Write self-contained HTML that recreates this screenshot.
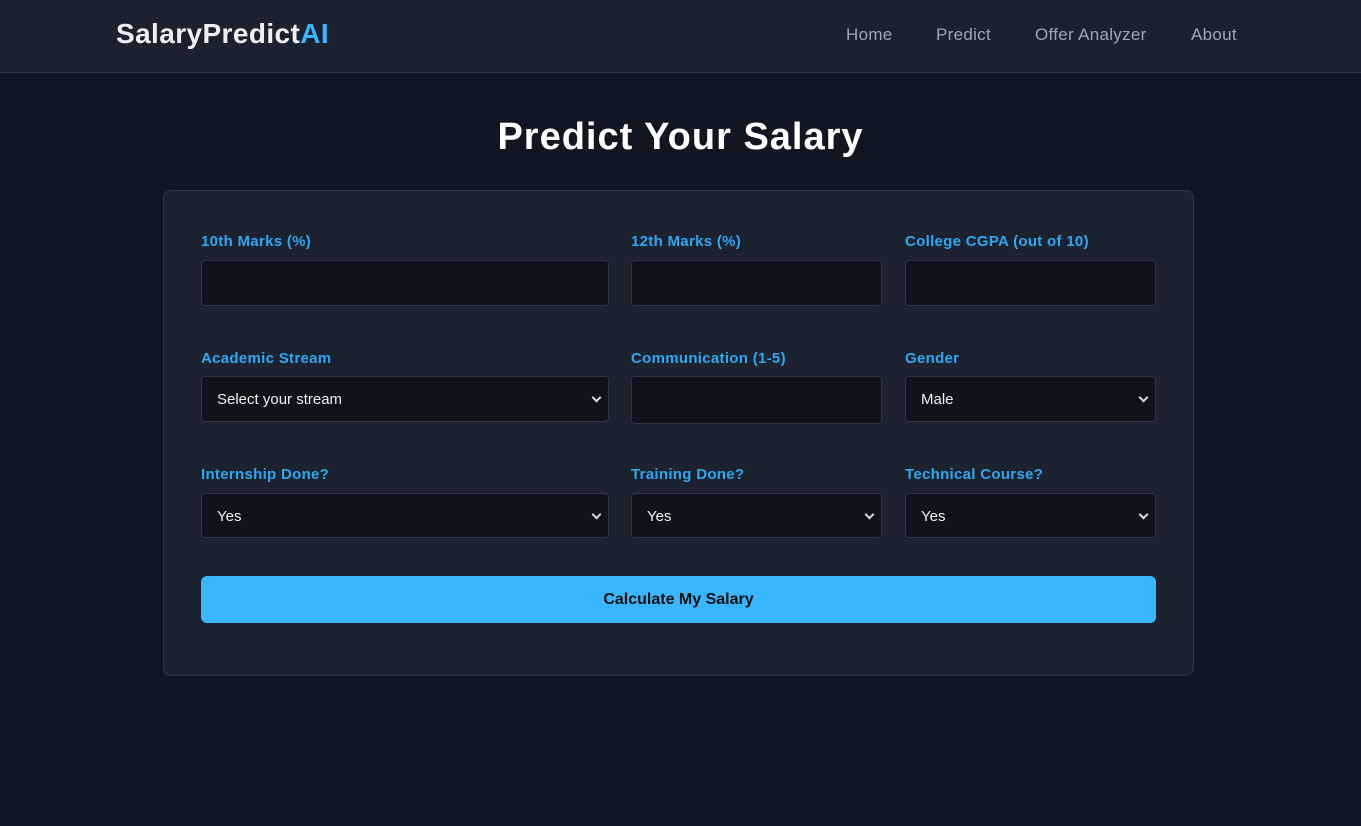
<!DOCTYPE html>
<html><head><meta charset="utf-8"><style>
*{margin:0;padding:0;box-sizing:border-box}
body{width:1361px;height:826px;background:#111722;font-family:"Liberation Sans",sans-serif;position:relative;overflow:hidden}
.hdr{position:absolute;left:0;top:0;width:1361px;height:73px;background:#1b212e;border-bottom:1px solid #2a3242}
.logo{position:absolute;left:116px;top:18px;font-size:28px;font-weight:bold;color:#eef0f3;letter-spacing:0.4px}
.logo span{color:#38b6ff}
.nav{position:absolute;top:25px;font-size:17px;color:#a0a6b0;letter-spacing:0.3px}
h1{position:absolute;left:0;width:1361px;top:116px;text-align:center;font-size:38px;color:#fff;font-weight:bold;letter-spacing:1px}
.card{position:absolute;left:163px;top:190px;width:1031px;height:486px;background:#1c2230;border:1px solid #2c3445;border-radius:8px}
.lb{position:absolute;font-size:15px;font-weight:bold;color:#2ea8f0;letter-spacing:0.3px}
.in{position:absolute;background:#0f131b;border:1px solid #2c3445;border-radius:4px;height:46px;color:#f0f0f0;font-size:15px;padding:14px 15px}
.in.s::after{content:"";position:absolute;right:8px;top:17px;width:5px;height:5px;border-right:2px solid #ddd;border-bottom:2px solid #ddd;transform:rotate(45deg)}
.btn{position:absolute;left:201px;top:576px;width:955px;height:47px;background:#38b6ff;border-radius:6px;text-align:center;line-height:47px;font-size:16px;font-weight:bold;color:#111}
</style></head><body>
<div class="hdr">
<div class="logo">SalaryPredict<span>AI</span></div>
<div class="nav" style="left:846px">Home</div>
<div class="nav" style="left:936px">Predict</div>
<div class="nav" style="left:1035px">Offer Analyzer</div>
<div class="nav" style="left:1191px">About</div>
</div>
<h1>Predict Your Salary</h1>
<div class="card"></div>
<div class="lb" style="left:201px;top:233px">10th Marks (%)</div>
<div class="lb" style="left:631px;top:233px">12th Marks (%)</div>
<div class="lb" style="left:905px;top:233px">College CGPA (out of 10)</div>
<div class="in" style="left:201px;top:260px;width:408px"></div>
<div class="in" style="left:631px;top:260px;width:251px"></div>
<div class="in" style="left:905px;top:260px;width:251px"></div>
<div class="lb" style="left:201px;top:350px">Academic Stream</div>
<div class="lb" style="left:631px;top:350px">Communication (1-5)</div>
<div class="lb" style="left:905px;top:350px">Gender</div>
<div class="in s" style="left:201px;top:376px;width:408px;height:46px">Select your stream</div>
<div class="in" style="left:631px;top:376px;width:251px;height:48px"></div>
<div class="in s" style="left:905px;top:376px;width:251px">Male</div>
<div class="lb" style="left:201px;top:466px">Internship Done?</div>
<div class="lb" style="left:631px;top:466px">Training Done?</div>
<div class="lb" style="left:905px;top:466px">Technical Course?</div>
<div class="in s" style="left:201px;top:493px;width:408px;height:45px">Yes</div>
<div class="in s" style="left:631px;top:493px;width:251px;height:45px">Yes</div>
<div class="in s" style="left:905px;top:493px;width:251px;height:45px">Yes</div>
<div class="btn">Calculate My Salary</div>
</body></html>
